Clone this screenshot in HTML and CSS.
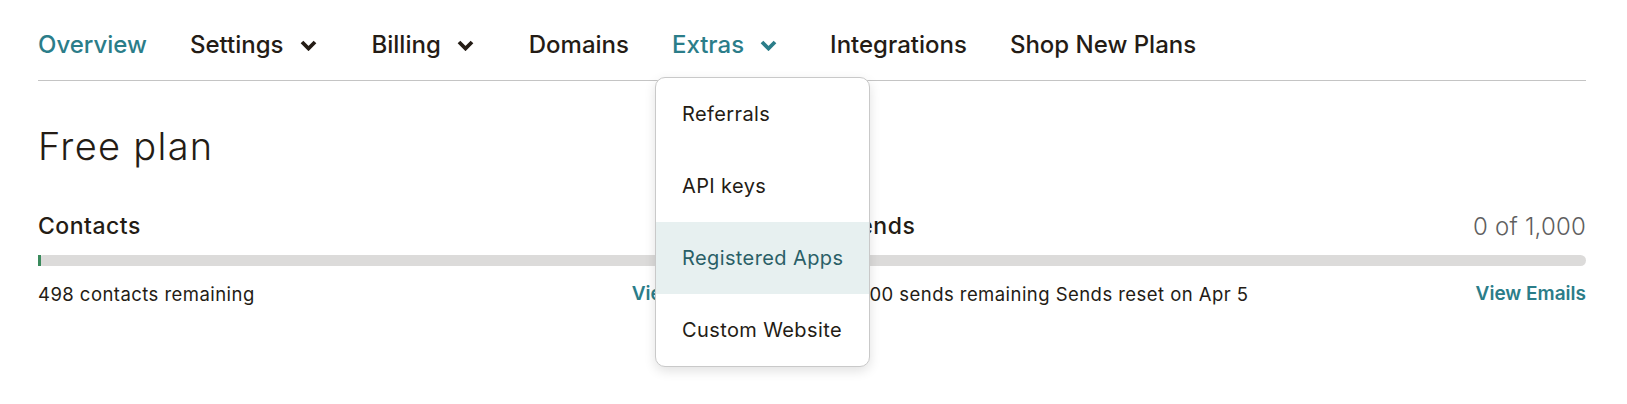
FILE: index.html
```html
<!DOCTYPE html>
<html lang="en">
<head>
<meta charset="utf-8">
<title>Free plan</title>
<link rel="stylesheet" href="styles.css">
</head>
<body>
<div class="page">
  <nav class="nav">
    <a class="nav-item active">Overview</a>
    <a class="nav-item has-menu">Settings
      <svg class="chev" viewBox="0 0 17 11" width="17" height="11"><path d="M2 2 L8.5 8.5 L15 2" /></svg>
    </a>
    <a class="nav-item has-menu">Billing
      <svg class="chev" viewBox="0 0 17 11" width="17" height="11"><path d="M2 2 L8.5 8.5 L15 2" /></svg>
    </a>
    <a class="nav-item">Domains</a>
    <div class="nav-item has-menu active open">Extras
      <svg class="chev" viewBox="0 0 17 11" width="17" height="11"><path d="M2 2 L8.5 8.5 L15 2" /></svg>
      <ul class="menu">
        <li class="menu-item">Referrals</li>
        <li class="menu-item">API keys</li>
        <li class="menu-item hover">Registered Apps</li>
        <li class="menu-item">Custom Website</li>
      </ul>
    </div>
    <a class="nav-item">Integrations</a>
    <a class="nav-item">Shop New Plans</a>
  </nav>

  <main class="main">
    <h1 class="title">Free plan</h1>
    <div class="usage">
      <section class="meter">
        <div class="meter-head">
          <h2 class="meter-title">Contacts</h2>
          <span class="meter-count">2 of 500</span>
        </div>
        <div class="bar"><div class="bar-fill" style="width: 3px"></div></div>
        <div class="meter-foot">
          <span class="meter-note">498 contacts remaining</span>
          <a class="meter-link">View Audiences</a>
        </div>
      </section>
      <section class="meter">
        <div class="meter-head">
          <h2 class="meter-title">Sends</h2>
          <span class="meter-count">0 of 1,000</span>
        </div>
        <div class="bar"><div class="bar-fill" style="width: 0px"></div></div>
        <div class="meter-foot">
          <span class="meter-note">1,000 sends remaining Sends reset on Apr 5</span>
          <a class="meter-link">View Emails</a>
        </div>
      </section>
    </div>
  </main>
</div>
</body>
</html>
```

FILE: styles.css
```css
* { box-sizing: border-box; }

html, body {
  margin: 0;
  padding: 0;
  background: #ffffff;
}

body {
  min-height: 404px;
  font-family: Inter, "Noto Sans", "Liberation Sans", sans-serif;
  color: #241c15;
}

.page {
  width: 1548px;
  min-height: 404px;
  margin-left: 38px;
}

.nav {
  display: flex;
  align-items: center;
  gap: 43px;
  padding: 30px 0 20px;
  border-bottom: 1px solid #c4c4c4;
}

.nav-item {
  position: relative;
  display: flex;
  align-items: center;
  font-size: 24px;
  line-height: 30px;
  font-weight: 500;
  color: #241c15;
  text-decoration: none;
  white-space: nowrap;
}

.nav-item.active { color: #2b7d89; }

.nav-item.has-menu { padding-right: 12px; }

.nav-item.open { padding-right: 10px; }

.chev {
  margin-left: 16px;
  fill: none;
  stroke: currentColor;
  stroke-width: 3.8;
  stroke-linecap: butt;
  stroke-linejoin: miter;
}

.menu {
  position: absolute;
  top: 47px;
  left: -17px;
  width: 215px;
  margin: 0;
  padding: 0;
  list-style: none;
  background: #ffffff;
  border: 1px solid #c9c9c9;
  border-radius: 10px;
  box-shadow: 0 4px 12px rgba(0, 0, 0, 0.12);
  overflow: hidden;
  z-index: 10;
}

.menu-item {
  height: 72px;
  display: flex;
  align-items: center;
  padding-left: 26px;
  font-size: 20px;
  font-weight: 400;
  letter-spacing: 0.4px;
  color: #241c15;
}

.menu-item.hover {
  background: #e7f0f0;
  color: #2a5f67;
}

.main {
  padding-top: 42px;
}

.title {
  margin: 0;
  font-size: 38px;
  line-height: 46px;
  font-weight: 300;
  letter-spacing: 1.3px;
}

.usage {
  display: grid;
  grid-template-columns: 1fr 1fr;
  column-gap: 64px;
  margin-top: 43px;
}

.meter-head {
  display: flex;
  justify-content: space-between;
  align-items: center;
  height: 28px;
}

.meter-title {
  margin: 0;
  font-size: 23px;
  font-weight: 500;
  line-height: 28px;
  letter-spacing: 0.5px;
}

.meter-count {
  font-size: 24px;
  font-weight: 300;
  letter-spacing: 0.2px;
  color: #5f5f5f;
}

.bar {
  position: relative;
  margin-top: 15px;
  height: 11px;
  border-radius: 6px;
  background: #dcdbda;
}

.bar-fill {
  height: 100%;
  background: #3a8a5c;
}

.meter-foot {
  display: flex;
  justify-content: space-between;
  align-items: center;
  margin-top: 16px;
  line-height: 24px;
}

.meter-note {
  font-size: 18.5px;
  letter-spacing: 0.45px;
}

.meter-link {
  font-size: 19px;
  font-weight: 600;
  color: #2b7d89;
}
```
